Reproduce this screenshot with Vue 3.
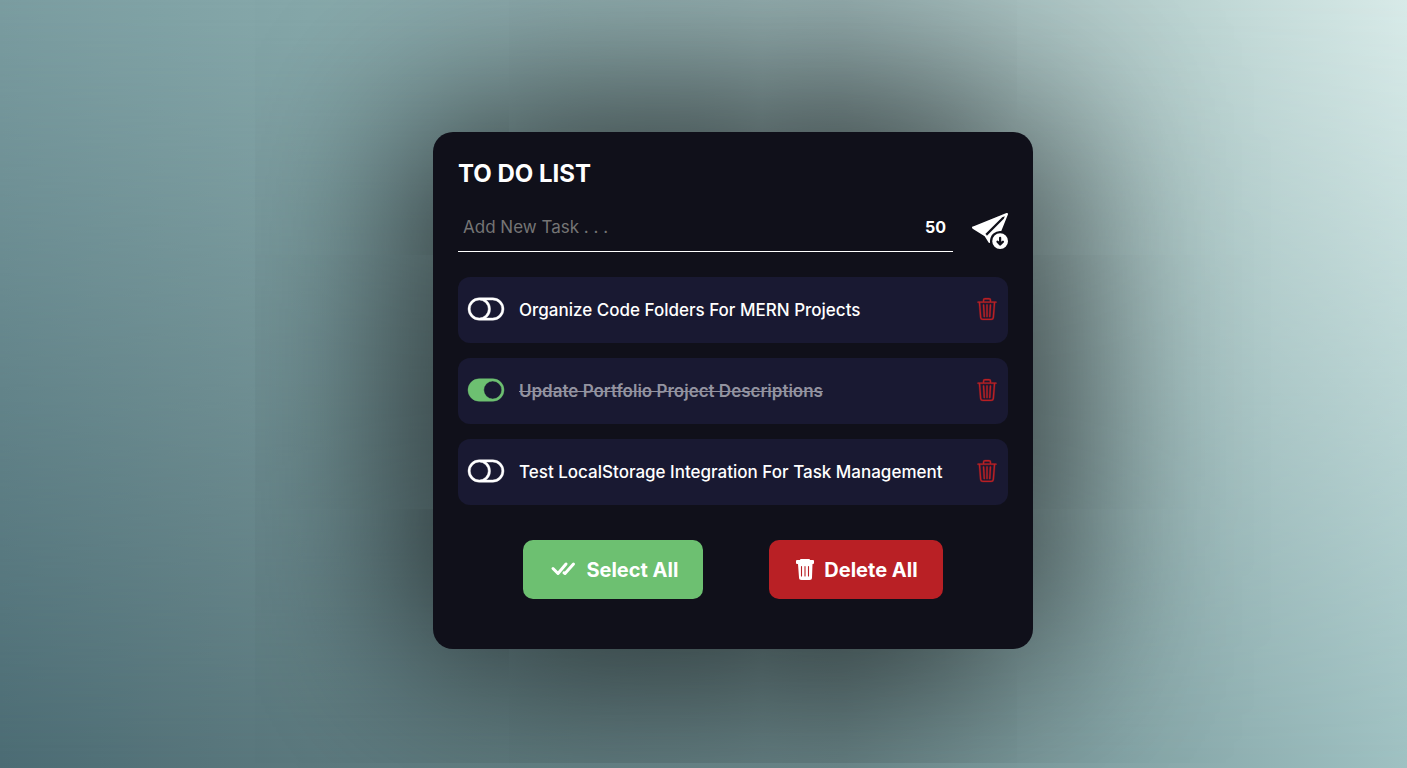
<script setup>
import { ref, computed } from 'vue'

const limit = 50
const draft = ref('')
const remaining = computed(() => limit - draft.value.length)
const tasks = ref([
  { id: 1, text: 'Organize Code Folders For MERN Projects', done: false },
  { id: 2, text: 'Update Portfolio Project Descriptions', done: true },
  { id: 3, text: 'Test LocalStorage Integration For Task Management', done: false }
])

function addTask() {
  const text = draft.value.trim()
  if (!text) return
  tasks.value.push({ id: Date.now(), text, done: false })
  draft.value = ''
}
function removeTask(id) {
  tasks.value = tasks.value.filter((t) => t.id !== id)
}
function selectAll() {
  tasks.value.forEach((t) => { t.done = true })
}
function deleteAll() {
  tasks.value = []
}
</script>

<template>
  <main class="page">
    <section class="card">
      <h1>TO DO LIST</h1>
      <form class="entry" @submit.prevent="addTask">
        <div class="field">
          <input v-model="draft" type="text" :maxlength="limit" placeholder="Add New Task . . ." aria-label="Add New Task" />
          <span class="count">{{ remaining }}</span>
        </div>
        <button class="send" type="submit" aria-label="Add task">
          <svg viewBox="0 0 16 16" width="36" height="36" fill="currentColor" aria-hidden="true">
            <path fill-rule="evenodd" d="M15.854.146a.5.5 0 0 1 .11.54L13.026 8.03A4.5 4.5 0 0 0 8 12.5c0 .5 0 1.5-.773.36l-1.59-2.498L.644 7.184l-.002-.001-.41-.261a.5.5 0 0 1 .083-.886l.452-.18.001-.001L15.314.035a.5.5 0 0 1 .54.111M6.637 10.07l7.494-7.494.471-1.178-1.178.471L5.93 9.363l.338.215a.5.5 0 0 1 .154.154z" />
            <path fill-rule="evenodd" d="M12.5 16a3.5 3.5 0 1 0 0-7 3.5 3.5 0 0 0 0 7m.354-1.646a.5.5 0 0 1-.722-.016l-1.149-1.25a.5.5 0 1 1 .737-.676l.28.305V11a.5.5 0 0 1 1 0v1.793l.396-.397a.5.5 0 0 1 .708.708z" />
          </svg>
        </button>
      </form>

      <ul class="tasks">
        <li v-for="task in tasks" :key="task.id" class="task" :class="{ done: task.done }">
          <label>
            <input v-model="task.done" class="check" type="checkbox" />
            <svg class="toggle" viewBox="0 0 16 16" width="36" height="36" fill="currentColor" stroke="currentColor" stroke-width="0.2" aria-hidden="true">
              <path v-if="task.done" d="M5 3a5 5 0 0 0 0 10h6a5 5 0 0 0 0-10zm6 9a4 4 0 1 1 0-8 4 4 0 0 1 0 8" />
              <path v-else d="M11 4a4 4 0 0 1 0 8H8a5 5 0 0 0 2-4 5 5 0 0 0-2-4zm-6 8a4 4 0 1 1 0-8 4 4 0 0 1 0 8M0 8a5 5 0 0 0 5 5h6a5 5 0 0 0 0-10H5a5 5 0 0 0-5 5" />
            </svg>
            <span class="text">{{ task.text }}</span>
          </label>
          <button class="remove" type="button" :aria-label="'Delete ' + task.text" @click="removeTask(task.id)">
            <svg viewBox="0 0 16 16" width="22" height="22" fill="currentColor" stroke="currentColor" stroke-width="0.2" aria-hidden="true">
              <path d="M6.5 1h3a.5.5 0 0 1 .5.5v1H6v-1a.5.5 0 0 1 .5-.5M11 2.5v-1A1.5 1.5 0 0 0 9.5 0h-3A1.5 1.5 0 0 0 5 1.5v1H1.5a.5.5 0 0 0 0 1h.538l.853 10.66A2 2 0 0 0 4.885 16h6.23a2 2 0 0 0 1.994-1.84l.853-10.66h.538a.5.5 0 0 0 0-1zm1.958 1-.846 10.58a1 1 0 0 1-.997.92h-6.23a1 1 0 0 1-.997-.92L3.042 3.5zm-7.487 1a.5.5 0 0 1 .528.47l.5 8.5a.5.5 0 0 1-.998.06L5 5.03a.5.5 0 0 1 .47-.53Zm5.058 0a.5.5 0 0 1 .47.53l-.5 8.5a.5.5 0 1 1-.998-.06l.5-8.5a.5.5 0 0 1 .528-.47M8 4.5a.5.5 0 0 1 .5.5v8.5a.5.5 0 0 1-1 0V5a.5.5 0 0 1 .5-.5" />
            </svg>
          </button>
        </li>
      </ul>

      <div class="actions">
        <button class="action select" type="button" @click="selectAll">
          <svg viewBox="0 0 28 18" width="28" height="18" fill="none" stroke="currentColor" stroke-width="3" stroke-linecap="round" stroke-linejoin="round" aria-hidden="true">
            <path d="M5 7.5l5 5L18 3M16 11.800L17 12.500L25.500 3" />
          </svg>
          Select All
        </button>
        <button class="action delete" type="button" @click="deleteAll">
          <svg viewBox="0 0 20 24" width="20" height="24" aria-hidden="true">
            <path fill="currentColor" d="M7 1h8a1 1 0 0 1 1 1h3a1 1 0 0 1 1 1v2a1 1 0 0 1-1 1h-.5l-.5 13.500a2.500 2.500 0 0 1-2.500 2.500h-8A2.500 2.500 0 0 1 5 19.500L4 6h-1a1 1 0 0 1-1-1V3a1 1 0 0 1 1-1h3a1 1 0 0 1 1-1z" />
            <path fill="none" stroke="#b92025" stroke-width="1.100" stroke-linecap="round" d="M7.500 8.500v9.500M11 8.500v9.500M14.500 8.500v9.500" />
          </svg>
          Delete All
        </button>
      </div>
    </section>
  </main>
</template>

<style>
body {
  margin: 0;
}
</style>

<style scoped>
.page {
  position: relative;
  isolation: isolate;
  box-sizing: border-box;
  min-height: 100vh;
  display: grid;
  place-items: center;
  padding: 13px 0 0 59px;
  overflow: hidden;
  font-family: Inter, "Open Sans", sans-serif;
  color: #fff;
  background: linear-gradient(90deg, #4c6c74, #5c797e 22%, #6b878a 60%, #85a5a7 80%, #9fc1c2);
}
.page::before {
  content: "";
  position: absolute;
  inset: 0;
  z-index: -1;
  background: linear-gradient(90deg, #7a9ca0, #87a9ab 22%, #9ab3b4 60%, #bcd4d2 84%, #d8eae8);
  mask-image: linear-gradient(180deg, #000, transparent);
}
.card {
  box-sizing: border-box;
  width: 600px;
  max-width: 100%;
  padding: 25px 25px 50px;
  border-radius: 20px;
  background: #10101a;
  box-shadow: 0 0 200px #000;
}
h1 {
  margin: 0;
  font-size: 24px;
  line-height: 34px;
  font-weight: 700;
}
.entry {
  display: flex;
  align-items: flex-end;
  gap: 19px;
  margin-top: 12px;
}
.field {
  flex: 1;
  display: flex;
  align-items: center;
  height: 49px;
  padding: 0 7px 0 5px;
  box-sizing: border-box;
  border-bottom: 1px solid #fff;
}
.field input {
  flex: 1;
  min-width: 0;
  padding: 0;
  border: 0;
  outline: 0;
  background: transparent;
  color: #fff;
  font: 400 17px/24px Inter, "Open Sans", sans-serif;
}
.field input::placeholder {
  color: #757575;
}
.count {
  font-size: 16px;
  line-height: 24px;
  font-weight: 700;
}
button {
  border: 0;
  padding: 0;
  background: none;
  color: #fff;
  font-family: inherit;
  cursor: pointer;
}
.send {
  padding-bottom: 3px;
}
svg {
  display: block;
  flex: none;
}
.tasks {
  display: grid;
  gap: 15px;
  margin: 25px 0 0;
  padding: 0;
  list-style: none;
}
.task {
  display: flex;
  align-items: center;
  box-sizing: border-box;
  min-height: 66px;
  padding: 0 10px;
  border-radius: 12px;
  background: #191932;
}
.task svg {
  margin-bottom: 2px;
  overflow: visible;
}
.task label {
  position: relative;
  flex: 1;
  display: flex;
  align-items: center;
  gap: 15px;
  cursor: pointer;
}
.check {
  position: absolute;
  opacity: 0;
  margin: 0;
}
.text {
  font-size: 17px;
  line-height: 24px;
  font-weight: 500;
}
.done .toggle {
  color: #6dc071;
}
.done .text {
  color: #9393a0;
  font-weight: 600;
  text-decoration: line-through;
}
.remove {
  color: #b92025;
}
.actions {
  display: flex;
  justify-content: center;
  gap: 66px;
  margin-top: 35px;
}
.action {
  display: flex;
  align-items: center;
  gap: 10px;
  height: 59px;
  padding: 0 25px;
  border-radius: 10px;
  font-size: 20px;
  font-weight: 700;
}
.select {
  background: #6dc071;
}
.delete {
  background: #b92025;
}
</style>
